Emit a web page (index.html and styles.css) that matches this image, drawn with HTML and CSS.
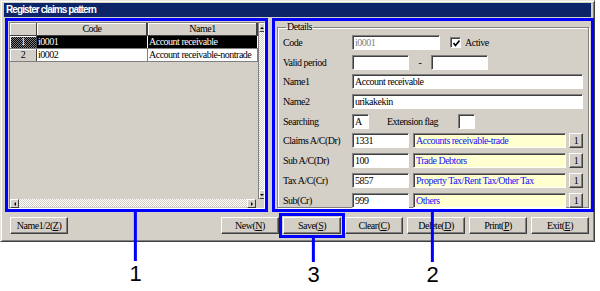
FILE: index.html
```html
<!DOCTYPE html>
<html lang="en">
<head>
    <meta charset="UTF-8">
    <title>Register claims pattern</title>
    <link rel="stylesheet" href="styles.css">
</head>
<body>
<div class="stage">

    <div class="window">
        <div class="titlebar">Register claims pattern</div>

        <div class="main">
            <!-- list of patterns -->
            <div class="panel panel-list">
                <div class="grid">
                    <div class="grid-body">
                        <div class="cells">
                            <div class="grow head">
                                <div class="rh"></div>
                                <div class="cell code">Code</div>
                                <div class="cell name">Name1</div>
                            </div>
                            <div class="grow sel">
                                <div class="rh">1</div>
                                <div class="cell code">i0001</div>
                                <div class="cell name">Account receivable</div>
                            </div>
                            <div class="grow">
                                <div class="rh">2</div>
                                <div class="cell code">i0002</div>
                                <div class="cell name">Account receivable-nontrade</div>
                            </div>
                        </div>
                        <div class="vscroll">
                            <span class="sbtn"><i class="arr up"></i></span>
                            <span class="track"></span>
                            <span class="sbtn"><i class="arr down"></i></span>
                        </div>
                    </div>
                    <div class="hscroll">
                        <span class="sbtn"><i class="arr left"></i></span>
                        <span class="track"></span>
                        <span class="sbtn"><i class="arr right"></i></span>
                        <span class="corner"></span>
                    </div>
                </div>
            </div>

            <!-- details form -->
            <div class="panel panel-detail">
                <fieldset class="details">
                    <legend>Details</legend>
                    <div class="form">
                        <span class="lbl">Code</span>
                        <div class="fld">
                            <span class="input w-code disabled">i0001</span>
                            <span class="check">
                                <svg width="7" height="7" viewBox="0 0 7 7"><polyline points="0.5,3 2.5,5.5 6.5,0.5" fill="none" stroke="#000" stroke-width="1.6"/></svg>
                            </span>
                            <span class="check-label">Active</span>
                        </div>

                        <span class="lbl">Valid period</span>
                        <div class="fld">
                            <span class="input w-date"></span>
                            <span class="dash">-</span>
                            <span class="input w-date"></span>
                        </div>

                        <span class="lbl">Name1</span>
                        <div class="fld"><span class="input w-full">Account receivable</span></div>

                        <span class="lbl">Name2</span>
                        <div class="fld"><span class="input w-full">urikakekin</span></div>

                        <span class="lbl">Searching</span>
                        <div class="fld">
                            <span class="input w-tiny">A</span>
                            <span class="ext-label">Extension flag</span>
                            <span class="input w-tiny"></span>
                        </div>

                        <span class="lbl">Claims A/C(Dr)</span>
                        <div class="fld">
                            <span class="input w-date">1331</span>
                            <span class="input ref">Accounts receivable-trade</span>
                            <span class="pick">1</span>
                        </div>

                        <span class="lbl">Sub A/C(Dr)</span>
                        <div class="fld">
                            <span class="input w-date">100</span>
                            <span class="input ref">Trade Debtors</span>
                            <span class="pick">1</span>
                        </div>

                        <span class="lbl">Tax A/C(Cr)</span>
                        <div class="fld">
                            <span class="input w-date">5857</span>
                            <span class="input ref">Property Tax/Rent Tax/Other Tax</span>
                            <span class="pick">1</span>
                        </div>

                        <span class="lbl">Sub(Cr)</span>
                        <div class="fld">
                            <span class="input w-date">999</span>
                            <span class="input ref">Others</span>
                            <span class="pick">1</span>
                        </div>
                    </div>
                </fieldset>
            </div>
        </div>

        <div class="buttons">
            <span class="btn">Name1/2(<u>Z</u>)</span>
            <div class="btn-group">
                <span class="btn">New(<u>N</u>)</span>
                <span class="btn marked">Save(<u>S</u>)</span>
                <span class="btn">Clear(<u>C</u>)</span>
                <span class="btn">Delete(<u>D</u>)</span>
                <span class="btn">Print(<u>P</u>)</span>
                <span class="btn">Exit(<u>E</u>)</span>
            </div>
        </div>
    </div>

    <!-- annotation callouts -->
    <div class="callout c1"><span class="stem"></span><span class="num">1</span></div>
    <div class="callout c2"><span class="stem"></span><span class="num">2</span></div>
    <div class="callout c3"><span class="stem"></span><span class="num">3</span></div>
</div>
</body>
</html>
```

FILE: styles.css
```css
/* Page */
* {
    box-sizing: border-box;
}

body {
    margin: 0;
    background: #fff;
    font-family: "Liberation Serif", serif;
    font-size: 10px;
    letter-spacing: -0.5px;
    color: #000;
}

.stage {
    position: relative;
    width: 600px;
    height: 291px;
}

/* Window frame */
.window {
    width: 595px;
    height: 242px;
    background: #d4d0c8;
    border: 1px solid;
    border-color: #e8e6e0 #404040 #404040 #e8e6e0;
    box-shadow: inset 1px 1px 0 #fff, inset -1px -1px 0 #808080;
    padding: 2px 3px 0 3px;
    display: flex;
    flex-direction: column;
}

.titlebar {
    height: 14px;
    background: #0c2468;
    color: #fff;
    font-family: "Liberation Sans", sans-serif;
    font-weight: 700;
    font-size: 10px;
    letter-spacing: -0.9px;
    line-height: 14px;
    padding-left: 2px;
}

.main {
    display: flex;
    gap: 4px;
    margin-top: 1px;
    margin-left: 1px;
    margin-right: -2px;
    height: 194px;
}

/* Blue highlight boxes */
.panel {
    border: 3px solid #0000ff;
    height: 100%;
    display: flex;
}

.panel-list {
    width: 263px;
    padding: 1px 0 0 1px;
}

.panel-detail {
    flex: 1;
}

/* Data grid */
.grid {
    flex: 1;
    display: flex;
    flex-direction: column;
    border: 1px solid;
    border-color: #808080 #fff #fff #808080;
    overflow: hidden;
}

.grid-body {
    flex: 1;
    display: flex;
    min-height: 0;
}

.cells {
    width: 248px;
    background: #d4d0c8;
}

.grow {
    display: flex;
    height: 13px;
    line-height: 12px;
    border-bottom: 1px solid #808080;
    background: #fff;
}

.grow .rh {
    width: 27px;
    background: #d4d0c8;
    text-align: center;
    border-right: 1px solid #404040;
    box-shadow: inset 1px 1px 0 #fff;
}

.grow .cell {
    border-right: 1px solid #808080;
    padding-left: 1px;
    white-space: nowrap;
    overflow: hidden;
}

.grow .code {
    width: 111px;
}

.grow .name {
    width: 110px;
}

.grow.head {
    background: #d4d0c8;
    border-bottom-color: #404040;
}

.grow.head .cell {
    text-align: center;
    border-right: 2px solid #404040;
    box-shadow: inset 1px 1px 0 #fff;
}

.grow.sel {
    background: #000;
    color: #fff;
}

.grow.sel .rh {
    background: repeating-conic-gradient(#000 0 25%, #808080 0 50%) 0 0 / 2px 2px;
    color: #fff;
}

.grow.sel .cell {
    border-right-color: #fff;
}

/* Scroll bars */
.vscroll {
    flex: 1;
    display: flex;
    flex-direction: column;
    border-left: 1px solid #808080;
}

.hscroll {
    height: 8px;
    display: flex;
    margin-bottom: 1px;
}

.track {
    flex: 1;
    background: repeating-conic-gradient(#fff 0 25%, #d4d0c8 0 50%) 0 0 / 2px 2px;
}

.sbtn {
    width: 9px;
    height: 9px;
    background: #d4d0c8;
    border: 1px solid;
    border-color: #fff #404040 #404040 #fff;
    display: flex;
    align-items: center;
    justify-content: center;
}

.vscroll .sbtn {
    width: auto;
}

.corner {
    width: 8px;
    background: #d4d0c8;
}

.arr {
    width: 0;
    height: 0;
    border: 2px solid transparent;
}

.arr.up { border-bottom-color: #000; margin-top: -2px; }
.arr.down { border-top-color: #000; margin-bottom: -2px; }
.arr.left { border-right-color: #000; margin-left: -2px; }
.arr.right { border-left-color: #000; margin-right: -2px; }

/* Details group */
.details {
    flex: 1;
    margin: 0 2px 1px 2px;
    padding: 2px 5px 0 5px;
    border: 1px solid #808080;
    box-shadow: 1px 1px 0 #fff, inset 1px 1px 0 #fff;
    min-width: 0;
}

.details legend {
    padding: 0 1px;
    margin-left: 3px;
    line-height: 12px;
}

.form {
    display: grid;
    grid-template-columns: 69px 1fr;
    grid-auto-rows: 15px;
    row-gap: 4.7px;
    align-items: center;
}

.fld {
    display: flex;
    align-items: center;
    height: 15px;
}

.input {
    height: 15px;
    background: #fff;
    border: 1px solid;
    border-color: #808080 #fff #fff #808080;
    box-shadow: inset 1px 1px 0 #404040;
    padding-left: 2px;
    line-height: 13px;
    white-space: nowrap;
    overflow: hidden;
}

.w-code { width: 88px; }
.w-date { width: 57px; }
.w-full { width: 231px; }
.w-tiny { width: 17px; }

.disabled {
    color: #808080;
}

.check {
    width: 11px;
    height: 11px;
    margin-left: 10px;
    background: #fff;
    border: 1px solid;
    border-color: #808080 #fff #fff #808080;
    box-shadow: inset 1px 1px 0 #404040;
    display: flex;
    align-items: center;
    justify-content: center;
    padding: 1px 0 0 1px;
}

.check-label {
    margin-left: 4px;
}

.dash {
    width: 22px;
    text-align: center;
}

.ext-label {
    margin-left: 18px;
    width: 71px;
}

.ref {
    width: 153px;
    margin-left: 4px;
    background: #ffffd0;
    color: #1414ff;
}

.pick {
    width: 14px;
    height: 15px;
    margin-left: 3px;
    border: 1px solid;
    border-color: #fff #404040 #404040 #fff;
    box-shadow: inset -1px -1px 0 #808080;
    text-align: center;
    line-height: 13px;
}

/* Bottom command buttons */
.buttons {
    display: flex;
    justify-content: space-between;
    margin-top: 5px;
    padding-left: 6px;
    padding-right: 2px;
}

.btn-group {
    display: flex;
    gap: 4px;
}

.btn {
    display: block;
    width: 58px;
    height: 17px;
    background: #d4d0c8;
    border: 1px solid;
    border-color: #fff #404040 #404040 #fff;
    box-shadow: inset -1px -1px 0 #808080;
    text-align: center;
    line-height: 15px;
}

.btn u {
    text-decoration-thickness: 1px;
    text-underline-offset: 1px;
}

.btn.marked {
    outline: 3px solid #0000ff;
    outline-offset: 1px;
}

/* Callouts */
.callout {
    position: absolute;
    display: flex;
    flex-direction: column;
    align-items: center;
    transform: translateX(-50%);
}

.callout .stem {
    width: 3px;
    background: #0000ff;
}

.callout .num {
    font-family: "Liberation Sans", sans-serif;
    font-size: 22px;
    line-height: 20px;
    letter-spacing: 0;
    margin-top: 3px;
}

.c1 { left: 135.5px; top: 212px; }
.c1 .stem { height: 49px; }

.c2 { left: 432.5px; top: 212px; }
.c2 .stem { height: 50px; }

.c3 { left: 313.5px; top: 237px; }
.c3 .stem { height: 25px; }
```
